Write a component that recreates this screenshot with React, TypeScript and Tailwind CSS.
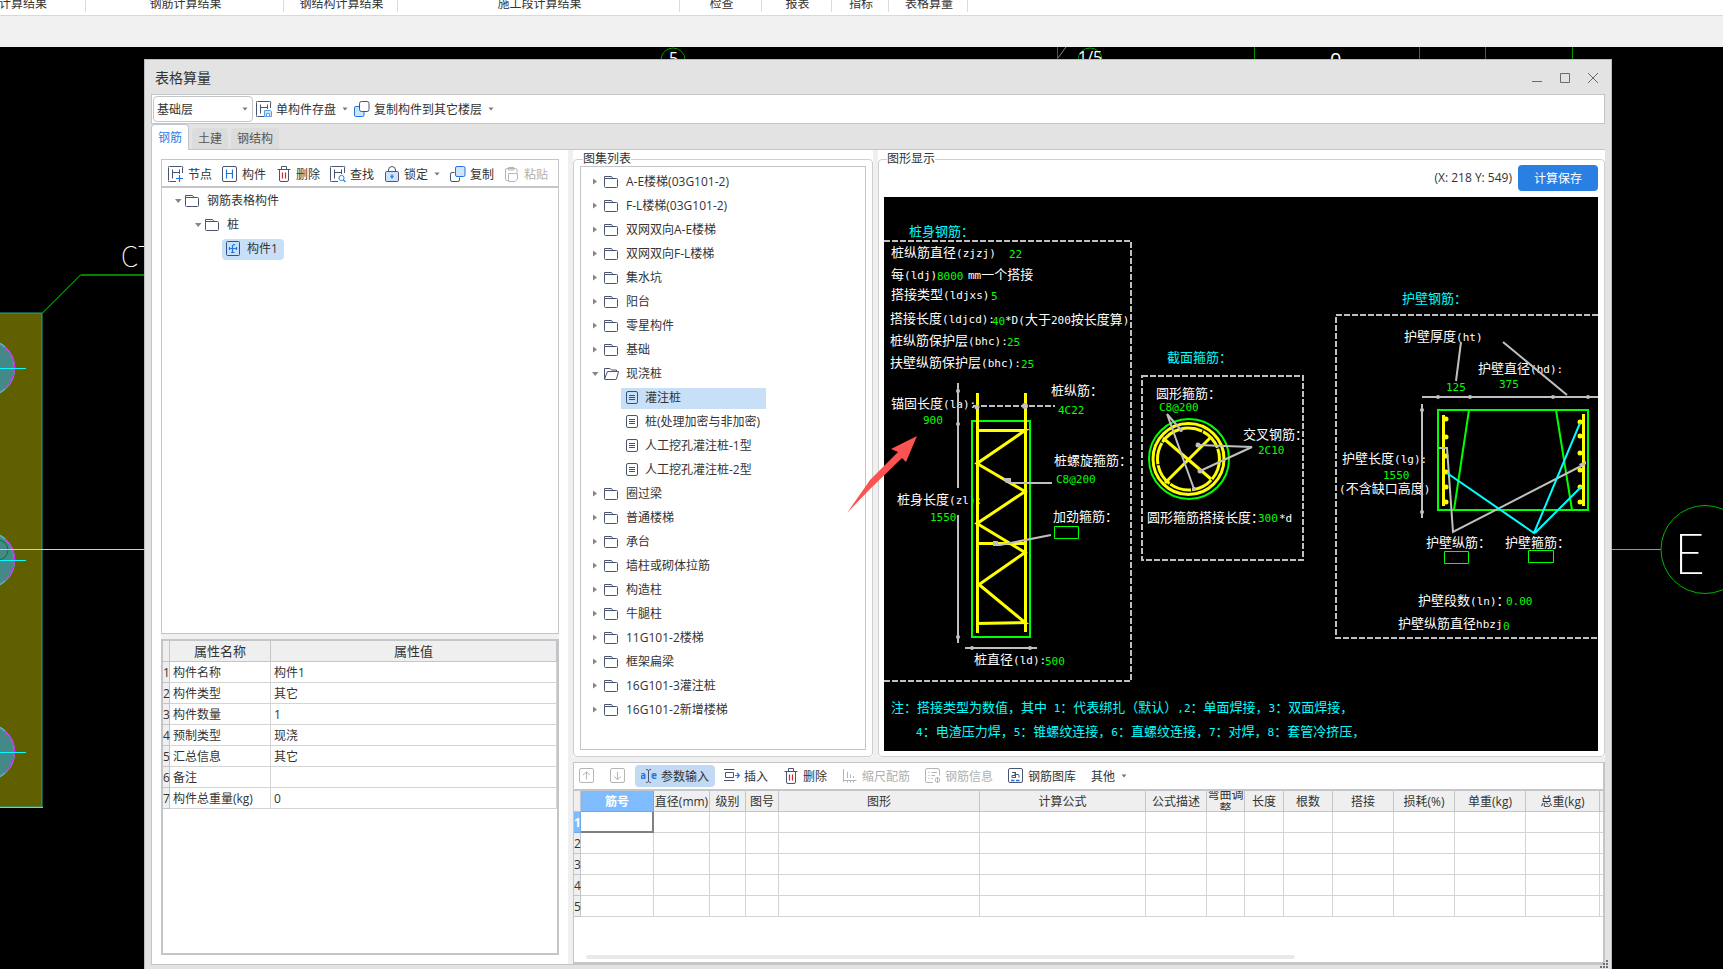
import type { ReactNode } from "react";

/* ---------- data ---------- */

const RIBBON_GROUPS = [
  { label: "土建计算结果", cell: "w-[86px] justify-end pr-[38px]" },
  { label: "钢筋计算结果", cell: "w-[198px] justify-center pl-0.5" },
  { label: "钢结构计算结果", cell: "w-[114px] justify-center pl-0.5" },
  { label: "施工段计算结果", cell: "w-[282px] justify-center pl-0.5" },
  { label: "检查", cell: "w-[82px] justify-center pl-0.5" },
  { label: "报表", cell: "w-[70px] justify-center pl-0.5" },
  { label: "指标", cell: "w-[57px] justify-center pl-0.5" },
  { label: "表格算量", cell: "w-[79px] justify-center pl-0.5" },
];

const PROPERTIES = [
  ["构件名称", "构件1"],
  ["构件类型", "其它"],
  ["构件数量", "1"],
  ["预制类型", "现浇"],
  ["汇总信息", "其它"],
  ["备注", ""],
  ["构件总重量(kg)", "0"],
];

const ATLAS: { label: string; children?: string[] }[] = [
  { label: "A-E楼梯(03G101-2)" },
  { label: "F-L楼梯(03G101-2)" },
  { label: "双网双向A-E楼梯" },
  { label: "双网双向F-L楼梯" },
  { label: "集水坑" },
  { label: "阳台" },
  { label: "零星构件" },
  { label: "基础" },
  {
    label: "现浇桩",
    children: ["灌注桩", "桩(处理加密与非加密)", "人工挖孔灌注桩-1型", "人工挖孔灌注桩-2型"],
  },
  { label: "圈过梁" },
  { label: "普通楼梯" },
  { label: "承台" },
  { label: "墙柱或砌体拉筋" },
  { label: "构造柱" },
  { label: "牛腿柱" },
  { label: "11G101-2楼梯" },
  { label: "框架扁梁" },
  { label: "16G101-3灌注桩" },
  { label: "16G101-2新增楼梯" },
];

const REBAR_COLUMNS = [
  { label: "筋号", col: "w-[73px]" },
  { label: "直径(mm)", col: "w-[56px]" },
  { label: "级别", col: "w-[36px]" },
  { label: "图号", col: "w-[33px]" },
  { label: "图形", col: "w-[201px]" },
  { label: "计算公式", col: "w-[166px]" },
  { label: "公式描述", col: "w-[61px]" },
  { label: "弯曲调整", col: "w-[38px]" },
  { label: "长度", col: "w-[39px]" },
  { label: "根数", col: "w-[49px]" },
  { label: "搭接", col: "w-[61px]" },
  { label: "损耗(%)", col: "w-[61px]" },
  { label: "单重(kg)", col: "w-[71px]" },
  { label: "总重(kg)", col: "w-[74px]" },
];

type Note = [x: number, y: number, text: string];

const WHITE_NOTES: Note[] = [
  [7, 60, "桩纵筋直径(zjzj)"],
  [7, 82, "每(ldj)"],
  [84, 82, "mm一个搭接"],
  [7, 102, "搭接类型(ldjxs)"],
  [6, 126, "搭接长度(ldjcd):"],
  [121, 127, "*D(大于200按长度算)"],
  [6, 148, "桩纵筋保护层(bhc):"],
  [6, 170, "扶壁纵筋保护层(bhc):"],
  [7, 211, "锚固长度(la):"],
  [167, 198, "桩纵筋："],
  [170, 268, "桩螺旋箍筋："],
  [169, 324, "加劲箍筋："],
  [13, 307, "桩身长度(zl):"],
  [90, 467, "桩直径(ld):"],
  [272, 201, "圆形箍筋："],
  [359, 242, "交叉钢筋："],
  [263, 325, "圆形箍筋搭接长度："],
  [395, 325, "*d"],
  [520, 144, "护壁厚度(ht)"],
  [594, 176, "护壁直径(hd):"],
  [458, 266, "护壁长度(lg):"],
  [455, 296, "(不含缺口高度)"],
  [542, 350, "护壁纵筋："],
  [621, 350, "护壁箍筋："],
  [534, 408, "护壁段数(ln)："],
  [514, 431, "护壁纵筋直径hbzj"],
];

const GREEN_NOTES: Note[] = [
  [125, 61, "22"],
  [53, 83, "8000"],
  [107, 103, "5"],
  [108, 128, "40"],
  [123, 149, "25"],
  [137, 171, "25"],
  [39, 227, "900"],
  [174, 217, "4C22"],
  [172, 286, "C8@200"],
  [46, 324, "1550"],
  [161, 468, "500"],
  [275, 214, "C8@200"],
  [374, 257, "2C10"],
  [374, 325, "300"],
  [562, 194, "125"],
  [615, 191, "375"],
  [499, 282, "1550"],
  [622, 408, "0.00"],
  [619, 433, "0"],
];

const CYAN_NOTES: Note[] = [
  [25, 39, "桩身钢筋："],
  [283, 165, "截面箍筋："],
  [518, 106, "护壁钢筋："],
  [7, 515, "注：搭接类型为数值，其中 1：代表绑扎（默认）,2：单面焊接，3：双面焊接，"],
  [32, 539, "4：电渣压力焊，5：锥螺纹连接，6：直螺纹连接，7：对焊，8：套管冷挤压，"],
];

/* ---------- icons ---------- */

function Icon({ children, className = "text-[#4a5370]" }: { children: ReactNode; className?: string }) {
  return (
    <svg viewBox="0 0 16 16" className={`size-4 shrink-0 ${className}`} fill="none" stroke="currentColor">
      {children}
    </svg>
  );
}

const FrameCut = () => (
  <>
    <path d="M8 15.500H2A1 1 0 0 1 .5 14V2A1 1 0 0 1 2 .5h11A1 1 0 0 1 14.500 2V7" />
    <path d="M4.500 3.500v9M11.500 3.500V8M4.500 6.500h7" />
  </>
);

const SaveIcon = () => (
  <Icon>
    <FrameCut />
    <path d="M8.500 9.500h6l1 1v5h-7z" stroke="#5a9dec" fill="#cfe3fa" />
    <path d="M10.500 12.500h3v3h-3z" stroke="#5a9dec" fill="#fff" />
  </Icon>
);

const NodeIcon = () => (
  <Icon>
    <FrameCut />
    <path d="M11.500 9v7M8 12.500h7" stroke="#1f74e0" strokeWidth="1.200" />
  </Icon>
);

const MemberIcon = () => (
  <Icon>
    <rect x=".5" y=".5" width="14" height="15" rx="1.500" />
    <path d="M4.500 3.500v9M10.500 3.500v9M4.500 7.500h6" stroke="#1f74e0" strokeWidth="1.200" />
  </Icon>
);

const TrashIcon = () => (
  <Icon>
    <path d="M1.500 3.500h13M5.500 3.500v-3h5v3M3.500 3.500V14A1.500 1.500 0 0 0 5 15.500h6a1.500 1.500 0 0 0 1.500-1.500V3.500" />
    <path d="M6.500 6.500v6M9.500 6.500v6" stroke="#d8242b" strokeWidth="1.200" />
  </Icon>
);

const FindIcon = () => (
  <Icon>
    <FrameCut />
    <circle cx="11.500" cy="12" r="2.600" stroke="#2a7fe2" />
    <path d="m13.500 14 2 2" stroke="#2a7fe2" strokeWidth="1.300" />
  </Icon>
);

const LockIcon = () => (
  <Icon>
    <path d="M4.500 5.500V4a3.500 3.500 0 0 1 7 0v1.500" />
    <rect x="1.500" y="5.500" width="13" height="10" rx="1.200" fill="#cfe3fa" />
    <path d="M8 8.500v4M6.500 10.500h3" stroke="#1f74e0" strokeWidth="1.300" />
  </Icon>
);

const CopyIcon = () => (
  <Icon>
    <path d="M4.500 6.500H2A1.500 1.500 0 0 0 .5 8v6A1.500 1.500 0 0 0 2 15.500h6A1.500 1.500 0 0 0 9.500 14v-2.500" />
    <rect x="5.500" y=".5" width="9.500" height="10" rx="1.500" stroke="#1f74e0" fill="#cfe3fa" />
  </Icon>
);

const CopyToIcon = () => (
  <Icon>
    <rect x=".5" y="5.500" width="9.500" height="10" rx="1.300" stroke="#1f74e0" fill="#cfe3fa" />
    <rect x="5.500" y=".5" width="9.500" height="10" rx="2" fill="#fff" />
  </Icon>
);

const PasteIcon = () => (
  <Icon className="text-[#b5b5b5]">
    <path d="M4.500 14.500H3A1.500 1.500 0 0 1 1.500 13V4A1.500 1.500 0 0 1 3 2.500h8.500A1.500 1.500 0 0 1 13 4v2.500M4.500 1.500h5.500V4H4.500z" />
    <path d="M4.500 7.500h9v5.500l-2.500 2.500H4.500z" />
  </Icon>
);

const FolderIcon = () => (
  <Icon>
    <path d="M1.500 4.500v-2h7l1.500 2M1.500 4.500h12a1 1 0 0 1 1 1v7a1 1 0 0 1-1 1h-11a1 1 0 0 1-1-1z" />
  </Icon>
);

const FolderOpenIcon = () => (
  <Icon>
    <path d="M1.500 13V2.500H7l1.500 1.500h5v1.500M1.500 13l3-7.500h11l-2 7.500a.8.8 0 0 1-.8.500H2a.5.5 0 0 1-.5-.5Z" />
  </Icon>
);

const SheetIcon = ({ active = false }: { active?: boolean }) => (
  <Icon className={active ? "text-[#2c5587]" : undefined}>
    <rect x="2.500" y="1.500" width="11" height="12" rx="1.500" />
    <path d="M5 5.500h6M5 7.500h6M5 9.500h6" />
  </Icon>
);

const MemberNodeIcon = () => (
  <Icon className="text-[#2c5587]">
    <rect x="1.500" y=".5" width="13" height="14" rx="1" />
    <path d="M4.500 7.500h7M7.500 11.500V5A1.500 1.500 0 0 1 10 4M4.500 6v3M11.500 6v3M6 11.500h3.500" stroke="#1f74e0" strokeWidth="1.200" />
  </Icon>
);

const ArrowBoxIcon = ({ down = false }: { down?: boolean }) => (
  <Icon className="text-[#b5b5b5]">
    <rect x=".5" y=".5" width="14" height="14" rx="1.500" />
    <path d={down ? "M7.500 4v7.500M4 8.500l3.500 3 3.500-3" : "M7.500 11.500V4M4 7l3.500-3L11 7"} />
  </Icon>
);

const ParamIcon = () => (
  <svg viewBox="0 0 16 16" className="size-4 shrink-0">
    <text x="-1" y="11" fill="#1f74e0" className="font-['Open_Sans',sans-serif] text-[10px] font-bold">a</text>
    <text x="10" y="11" fill="#1f74e0" className="font-['Open_Sans',sans-serif] text-[10px] font-bold">e</text>
    <path d="M5 1.500c1.500 0 2.500.5 2.500 1.500v10c0 1-1 1.500-2.500 1.500M10 1.500C8.500 1.500 7.500 2 7.500 3v10c0 1 1 1.500 2.500 1.500" fill="none" stroke="#4a5370" />
  </svg>
);

const InsertIcon = () => (
  <Icon>
    <path d="M0 1.500h10.500M0 12.500h10.500M1.500 4.500h8v5h-8z" />
    <path d="M11 7.500h4M13 5l2.500 2.500L13 10" stroke="#1f74e0" strokeWidth="1.200" />
  </Icon>
);

const ScaleIcon = () => (
  <Icon className="text-[#b5b5b5]">
    <path d="M1.500 1v13M5.500 4v6M8.500 6.500V10M11.500 8v2M1.500 12.500h13M5.500 12.500v2M8.500 12.500v2M11.500 12.500v2" />
  </Icon>
);

const InfoIcon = () => (
  <Icon className="text-[#b5b5b5]">
    <path d="M8 14.500H2A1.500 1.500 0 0 1 .5 13V2A1.500 1.500 0 0 1 2 .5h11A1.500 1.500 0 0 1 14.500 2v5.500M3.500 4.500h1M6.500 4.500H12M3.500 7.500h1M6.500 7.500H10M3.500 10.500h1M6.500 10.500H8" />
    <circle cx="12.500" cy="12" r="2.300" />
    <path d="M12.500 9v6" />
  </Icon>
);

const LibraryIcon = () => (
  <Icon>
    <rect x=".5" y=".5" width="14" height="14" rx="1.500" />
    <path d="M4 4.500h3V8M4 7.500h3M4 7.500v2h4M7.500 4v6M7.500 6.500H10a1 1 0 0 1 1 1v2" />
    <path d="M3 12.500h3.500M8 12.500h3.500" stroke="#1f74e0" strokeWidth="1.300" />
  </Icon>
);

const Caret = ({ className = "" }: { className?: string }) => (
  <svg viewBox="0 0 6 4" className={`h-1 w-1.5 shrink-0 ${className}`}>
    <path d="M.5.5h5L3 3.500z" fill="#777" />
  </svg>
);

const Twisty = ({ open = false }: { open?: boolean }) => (
  <svg viewBox="0 0 8 8" className="size-2 shrink-0">
    <path d={open ? "M1 2h6.500L4.200 6z" : "M2 .5v6l4-3z"} fill="#858585" />
  </svg>
);

/* ---------- shared parts ---------- */

type ToolProps = {
  icon?: ReactNode;
  label?: string;
  title?: string;
  caret?: boolean;
  disabled?: boolean;
  active?: boolean;
};

function Tool({ icon, label, title, caret, disabled, active }: ToolProps) {
  return (
    <button
      type="button"
      aria-label={title}
      disabled={disabled}
      className={`flex h-[22px] shrink-0 items-center gap-1 whitespace-nowrap disabled:text-[#b0b0b0] ${
        active ? "-mx-1.5 rounded bg-[#c1d9f2] px-1.5" : ""
      }`}
    >
      {icon}
      {label && <span className="pt-0.5">{label}</span>}
      {caret && <Caret className="ml-0.5" />}
    </button>
  );
}

/* ---------- CAD view behind the dialog ---------- */

function CadBackdrop() {
  const letter = "fill-white font-['Noto_Sans_CJK_SC',sans-serif] font-thin";
  return (
    <svg className="absolute inset-0 h-full w-full" fill="none" aria-hidden="true">
      <rect x="-4" y="266" width="46" height="494" fill="#606000" stroke="#22a79c" />
      <path d="M0 760.500h43" stroke="#0ff" />
      <path d="M42.500 266 81 227.500" stroke="#0e0" />
      <path d="M81 228h64" stroke="#008400" strokeWidth="2" />
      {[321, 513, 705].map((y) => (
        <g key={y}>
          <circle cx="-13.500" cy={y} r="28" fill="#448888" stroke="#63b2c4" strokeWidth="1.500" />
          <path d={`M5 ${y - 21}Q15 ${y - 12} 14.500 ${y}T5 ${y + 21}`} stroke="#f0f" />
          <path d={`M0 ${y + 0.5}h26`} stroke="#0ff" />
        </g>
      ))}
      <circle cx="-2" cy="503" r="10" stroke="#007a30" />
      <path d="M0 502.500h145" stroke="#d0d0d0" />
      <text x="121" y="220" className={`${letter} text-[28px]`}>CT</text>

      <path d="M1600 502.500h61" stroke="#0f0" />
      <circle cx="1705" cy="502.500" r="44" stroke="#00b400" />
      <text x="1674" y="527" className={`${letter} text-[55px]`}>E</text>

      <circle cx="673" cy="13" r="12" stroke="#00a000" />
      <circle cx="1090" cy="13" r="12" stroke="#00a000" />
      <path d="M1057.500 0v14" stroke="#c000c0" />
      <path d="m1058 11 8-11" stroke="#888" />
      <path d="M1254.500 0v14M1419.500 0v14M1485.500 0v14M1572.500 0v14" stroke="#009000" />
      <text x="669" y="17" className="fill-white font-['Open_Sans',sans-serif] text-[16px]">5</text>
      <text x="1078" y="16" className="fill-white font-['Open_Sans',sans-serif] text-[16px]">1/5</text>
      <text x="1330" y="20" className="fill-white font-['Open_Sans',sans-serif] text-[20px]">0</text>
    </svg>
  );
}

/* ---------- pile drawing ---------- */

function DrawingText({ notes, fill }: { notes: Note[]; fill: string }) {
  return (
    <g className={`${fill} stroke-none font-['Noto_Sans_CJK_SC',sans-serif] text-[13px]`}>
      {notes.map(([x, y, text]) => (
        <text key={`${x}-${y}`} x={x} y={y}>
          {text.split(/([\x20-\x7e]+)/).map((run, i) =>
            i % 2 ? (
              <tspan key={i} className="font-['DejaVu_Sans_Mono',monospace] text-[11px]">{run}</tspan>
            ) : (
              run
            )
          )}
        </text>
      ))}
    </g>
  );
}

function PileDrawing() {
  return (
    <svg width="714" height="554" fill="none" strokeWidth="2" role="img" aria-label="灌注桩">
      {/* frames */}
      <g stroke="#c0c0c0" strokeDasharray="6 2">
        <path d="M0 44h247v440H0" />
        <path d="M258 179h161v184H258z" />
        <path d="M714 118H452v323h262" />
      </g>

      <DrawingText notes={CYAN_NOTES} fill="fill-[#0ff]" />
      <DrawingText notes={WHITE_NOTES} fill="fill-white" />

      {/* pile elevation */}
      <path d="M88 224h58v216H88z" stroke="#0f0" />
      <g stroke="#ff0" strokeWidth="3">
        <path d="M93.500 196v240M141.500 196v239" />
        <path d="M93 233.500h48L93 266.500l48 28-48 32 48 29-46 32 46 38-49 1M93 346.500h48" />
      </g>
      <g stroke="#c0c0c0">
        <path d="M74 186v105M74 318v128M81 451h72" />
        <path d="M89 209h82" strokeDasharray="6 2" />
        <path d="M126 286h42M111 348h5l51-10" />
      </g>
      <g fill="#c0c0c0">
        <circle cx="74" cy="194" r="2" />
        <circle cx="74" cy="227" r="2" />
        <circle cx="74" cy="440" r="2" />
        <circle cx="88" cy="451" r="2" />
        <circle cx="146" cy="451" r="2" />
        <circle cx="141" cy="209" r="3" />
        <circle cx="93" cy="210" r="2.500" />
        <path d="M119 281h8v5h-5zM109 344h5v5h-5z" />
      </g>

      {/* section */}
      <circle cx="305" cy="262" r="40" stroke="#0f0" />
      <g stroke="#ff0" strokeWidth="3">
        <circle cx="304.500" cy="262" r="35.500" />
        <circle cx="304.500" cy="262" r="31" strokeDasharray="22 1" />
        <path d="m279 241 48 41M327 240l-46 46" />
      </g>
      <g stroke="#c0c0c0">
        <path d="m283 217 14 16M283 217l27 75M314 248l54 2-52 24" />
      </g>
      <g fill="#c0c0c0">
        <circle cx="297" cy="233" r="2" />
        <circle cx="310" cy="292" r="2" />
        <circle cx="314" cy="248" r="2.500" />
        <circle cx="316" cy="274" r="2.500" />
      </g>

      {/* retaining wall */}
      <path d="M554 213h150v100H554zM585 213l-15 100M672 213l16 100" stroke="#0f0" />
      <path d="M559.500 218v91M699.500 217v92" stroke="#ff0" strokeWidth="3" />
      <g fill="#ff0">
        {[222, 240, 259, 275, 290, 305].map((y) => (
          <circle key={y} cx="562" cy={y} r="2.500" />
        ))}
        {[225, 239, 256, 273, 290, 305].map((y) => (
          <circle key={y} cx="696" cy={y} r="2.500" />
        ))}
      </g>
      <g stroke="#c0c0c0">
        <path d="M538 200h176M538 207v114M577 145l-5 39M619 145l64 53" />
        <path d="M555 251h8l6 84 132-68" />
      </g>
      <g fill="#c0c0c0">
        {[554, 586, 669, 704].map((x) => (
          <circle key={x} cx={x} cy="200" r="2" />
        ))}
        <circle cx="538" cy="213" r="2" />
        <circle cx="538" cy="315" r="2" />
        <path d="m695 267 7-3v3l-5 3z" />
      </g>
      <path d="m563 276 87 60 46-110M651 336l46-46" stroke="#0ff" />

      {/* empty value boxes */}
      <g stroke="#0f0" strokeWidth="1">
        <path d="M170.500 329.500h24v12h-24zM560.500 354.500h24v12h-24zM644.500 353.500h25v12h-25z" />
      </g>
      <DrawingText notes={GREEN_NOTES} fill="fill-[#0f0]" />
    </svg>
  );
}

/* ---------- panels ---------- */

function LeftPane() {
  return (
    <section className="flex w-[417px] shrink-0 flex-col border-l border-[#c3c5c9] bg-white p-[9px]">
      <div className="flex h-[29px] shrink-0 items-center gap-2.5 border border-b-2 border-[#c3c5c9] pt-0.5 pl-1.5">
        <Tool icon={<NodeIcon />} label="节点" />
        <Tool icon={<MemberIcon />} label="构件" />
        <Tool icon={<TrashIcon />} label="删除" />
        <Tool icon={<FindIcon />} label="查找" />
        <Tool icon={<LockIcon />} label="锁定" caret />
        <Tool icon={<CopyIcon />} label="复制" />
        <Tool icon={<PasteIcon />} label="粘贴" disabled />
      </div>

      <ul className="min-h-0 flex-1 border border-t-0 border-[#c3c5c9] pt-px leading-6">
        <li>
          <div className="flex items-center pl-3">
            <Twisty open />
            <span className="mr-[7px] ml-0.5 flex"><FolderIcon /></span>
            钢筋表格构件
          </div>
          <ul>
            <li>
              <div className="flex items-center pl-8">
                <Twisty open />
                <span className="mr-[7px] ml-0.5 flex"><FolderIcon /></span>
                桩
              </div>
              <ul>
                <li className="flex h-6 items-center pl-[60px]">
                  <div className="flex h-[21px] items-center gap-1.5 rounded bg-[#c8dff8] pr-1.5 pl-[3px]">
                    <MemberNodeIcon />
                    构件1
                  </div>
                </li>
              </ul>
            </li>
          </ul>
        </li>
      </ul>

      <div className="h-[5px] shrink-0 bg-[#f0f0f0]" />

      <div className="h-[316px] shrink-0 border-2 border-[#c3c5c9]">
        <table className="w-[394px] table-fixed border-separate border-spacing-0">
          <colgroup>
            <col className="w-[7px]" />
            <col className="w-[101px]" />
            <col />
          </colgroup>
          <thead>
            <tr className="h-[21px] bg-[#efefef] text-[13px] leading-5">
              <th className="border-r border-b border-[#c3c5c9] p-0" />
              <th className="border-r border-b border-[#c3c5c9] p-0 font-normal">属性名称</th>
              <th className="border-r border-b border-[#c3c5c9] p-0 font-normal">属性值</th>
            </tr>
          </thead>
          <tbody>
            {PROPERTIES.map(([name, value], i) => (
              <tr key={name} className="h-[21px] leading-[18px]">
                <td className="border-r border-b border-[#c3c5c9] bg-[#efefef] px-0 pt-0.5 pb-0">{i + 1}</td>
                <td className="border-r border-b border-[#d4d4d4] pt-0.5 pr-0 pb-0 pl-[3px] whitespace-nowrap">{name}</td>
                <td className="border-r border-b border-[#d4d4d4] pt-0.5 pr-0 pb-0 pl-[3px]">{value}</td>
              </tr>
            ))}
          </tbody>
        </table>
      </div>
    </section>
  );
}

function AtlasPane() {
  return (
    <div className="flex w-[300px] shrink-0 bg-white">
      <fieldset className="flex min-w-0 flex-1 flex-col rounded border border-[#cfcfcf] px-1.5 pb-1.5">
        <legend className="ml-[3px] leading-[18px]">图集列表</legend>
        <ul className="-mt-0.5 min-h-0 flex-1 overflow-hidden border border-[#c3c5c9] pt-[3px] leading-6">
          {ATLAS.map((node) => (
            <li key={node.label}>
              <div className="flex items-center pl-2.5">
                <Twisty open={!!node.children} />
                <span className="mr-[7px] ml-1 flex">{node.children ? <FolderOpenIcon /> : <FolderIcon />}</span>
                {node.label}
              </div>
              {node.children && (
                <ul>
                  {node.children.map((child, i) => (
                    <li key={child} className="flex h-6 items-center pl-10">
                      <div className={`flex h-[21px] w-[145px] items-center gap-[5px] pl-[3px] whitespace-nowrap ${i === 0 ? "bg-[#c8dff8]" : ""}`}>
                        <SheetIcon active={i === 0} />
                        {child}
                      </div>
                    </li>
                  ))}
                </ul>
              )}
            </li>
          ))}
        </ul>
      </fieldset>
    </div>
  );
}

function DrawingPane() {
  return (
    <div className="relative flex min-w-0 flex-1 bg-white">
      <fieldset className="flex min-w-0 flex-1 flex-col rounded border border-[#cfcfcf] pr-1.5 pb-[5px] pl-[5px]">
        <legend className="ml-[3px] leading-[18px]">图形显示</legend>
        <div className="-mt-[3px] mb-1.5 flex shrink-0 items-center justify-end gap-1.5">
          <output>(X: 218 Y: 549)</output>
          <button type="button" className="h-[26px] w-20 rounded bg-[#2a7fe2] pt-0.5 text-white">计算保存</button>
        </div>
        <div className="min-h-0 flex-1 overflow-hidden bg-black">
          <PileDrawing />
        </div>
      </fieldset>
      {/* callout pointing at the anchorage length */}
      <svg width="70" height="78" className="pointer-events-none absolute top-[286px] -left-[31px]">
        <path d="M0 77 23 44l28-28-7-3L70 0 59 26l-4-4-32 31z" fill="#fb5252" />
      </svg>
    </div>
  );
}

function RebarPane() {
  return (
    <section className="flex h-[202px] shrink-0 flex-col border border-r-2 border-b-2 border-[#c3c5c9] bg-white">
      <div className="flex h-[28px] shrink-0 items-center gap-[15px] border-b-2 border-[#c3c5c9] pl-[5px]">
        <Tool icon={<ArrowBoxIcon />} title="上移" disabled />
        <Tool icon={<ArrowBoxIcon down />} title="下移" disabled />
        <Tool icon={<ParamIcon />} label="参数输入" active />
        <Tool icon={<InsertIcon />} label="插入" />
        <Tool icon={<TrashIcon />} label="删除" />
        <Tool icon={<ScaleIcon />} label="缩尺配筋" disabled />
        <Tool icon={<InfoIcon />} label="钢筋信息" disabled />
        <Tool icon={<LibraryIcon />} label="钢筋图库" />
        <Tool label="其他" caret />
      </div>

      <div className="min-h-0 flex-1 overflow-hidden">
        <table className="w-full table-fixed border-separate border-spacing-0">
          <colgroup>
            <col className="w-[7px]" />
            {REBAR_COLUMNS.map((c) => (
              <col key={c.label} className={c.col} />
            ))}
            <col />
          </colgroup>
          <thead>
            <tr className="h-[21px] bg-[#efefef]">
              <th className="border-r border-b border-[#c3c5c9] p-0" />
              {REBAR_COLUMNS.map((c, i) => (
                <th
                  key={c.label}
                  className={`border-r border-b p-0 ${
                    i === 0 ? "border-[#6ea9ec] bg-[#7fbbff] font-bold text-white" : "border-[#c3c5c9] font-normal"
                  }`}
                >
                  <div className="flex h-5 items-center justify-center overflow-hidden pt-0.5 leading-[14px]">{c.label}</div>
                </th>
              ))}
              <th className="border-b border-[#c3c5c9] p-0" />
            </tr>
          </thead>
          <tbody>
            {[1, 2, 3, 4, 5].map((n) => (
              <tr key={n} className="h-[21px] leading-[18px]">
                <td
                  className={`border-r border-b px-0 pt-0.5 pb-0 ${
                    n === 1 ? "border-[#6ea9ec] bg-[#7fbbff] font-bold text-white" : "border-[#c3c5c9] bg-[#efefef]"
                  }`}
                >
                  {n}
                </td>
                {REBAR_COLUMNS.map((c, i) => (
                  <td
                    key={c.label}
                    className={`p-0 ${
                      n === 1 && i === 0 ? "border-r-2 border-b-2 border-[#808080]" : "border-r border-b border-[#d4d4d4]"
                    }`}
                  />
                ))}
                <td className="border-b border-[#d4d4d4] p-0" />
              </tr>
            ))}
          </tbody>
        </table>
      </div>

      <div className="mr-[308px] mb-[3px] ml-3 h-1 shrink-0 rounded-full bg-[#e9e9e9]" />
    </section>
  );
}

function TitleBar() {
  return (
    <header className="flex h-[34px] shrink-0 items-center justify-between pt-0.5 pr-1.5 pl-1">
      <h1 className="text-sm">表格算量</h1>
      <div className="flex gap-4 text-[#6b6b6b]">
        <button type="button" aria-label="最小化">
          <svg width="12" height="12" stroke="currentColor"><path d="M1 9.500h10" /></svg>
        </button>
        <button type="button" aria-label="最大化">
          <svg width="12" height="12" stroke="currentColor" fill="none"><path d="M1.500 1.500h9v9h-9z" /></svg>
        </button>
        <button type="button" aria-label="关闭">
          <svg width="12" height="12" stroke="currentColor"><path d="m1 1 10 10M11 1 1 11" /></svg>
        </button>
      </div>
    </header>
  );
}

export default function App() {
  return (
    <div
      lang="zh-CN"
      className="flex h-screen min-h-[720px] flex-col overflow-hidden bg-black font-['Open_Sans','Noto_Sans_CJK_SC',sans-serif] text-[12px] leading-4 text-[#333]"
    >
      {/* bottom edge of the ribbon */}
      <nav className="flex h-4 shrink-0 overflow-hidden border-b border-[#d8d8d8] bg-white">
        {RIBBON_GROUPS.map((g) => (
          <div key={g.label} className={`flex h-3 shrink-0 items-end border-r border-[#dcdcdc] whitespace-nowrap ${g.cell}`}>
            {g.label}
          </div>
        ))}
      </nav>
      <div className="h-[31px] shrink-0 bg-[#f1f1f1]" />

      <main className="relative flex min-h-0 flex-1 pt-3 pr-[111px] pl-36">
        <CadBackdrop />

        <div className="relative flex min-w-0 flex-1 flex-col border border-b-0 border-[#bcbcbc] bg-[#e3e3e3] px-1.5">
          <TitleBar />

          <div className="flex h-[30px] shrink-0 items-center border border-[#c3c5c9] bg-white pl-px">
            <label className="relative mr-[3px] flex">
              <span className="sr-only">楼层</span>
              <select className="h-[26px] w-[100px] appearance-none rounded border border-[#c3c5c9] bg-white pt-0.5 pl-[3px]">
                <option>基础层</option>
              </select>
              <Caret className="absolute top-[11px] right-[5px]" />
            </label>
            <div className="flex gap-1.5">
              <Tool icon={<SaveIcon />} label="单构件存盘" caret />
              <Tool icon={<CopyToIcon />} label="复制构件到其它楼层" caret />
            </div>
          </div>

          <div className="flex h-[26px] shrink-0 items-end border-b border-[#c3c5c9]" role="tablist">
            <button type="button" role="tab" aria-selected="true" className="-mb-px h-[26px] w-[38px] rounded-t border border-b-0 border-[#c3c5c9] bg-white text-[#2a7fe2]">
              钢筋
            </button>
            <button type="button" role="tab" aria-selected="false" className="ml-[3px] h-[21px] w-9 rounded-t bg-[#dcdcdc] text-[#555]">
              土建
            </button>
            <button type="button" role="tab" aria-selected="false" className="ml-[3px] h-[21px] w-12 rounded-t bg-[#dcdcdc] text-[#555]">
              钢结构
            </button>
          </div>

          <div className="flex min-h-0 flex-1 gap-[5px] border-b border-[#c3c5c9] bg-[#f0f0f0]">
            <LeftPane />
            <div className="flex min-w-0 flex-1 flex-col gap-[5px]">
              <div className="flex min-h-0 flex-1 gap-[5px]">
                <AtlasPane />
                <DrawingPane />
              </div>
              <RebarPane />
            </div>
          </div>
          <div className="h-1 shrink-0" />

          {/* resize grip */}
          <svg width="9" height="9" className="absolute right-0.5 bottom-0">
            <path d="M6 0h2v2H6zM3 3h2v2H3zM6 3h2v2H6zM0 6h2v2H0zM3 6h2v2H3zM6 6h2v2H6z" fill="#6b7078" />
          </svg>
        </div>
      </main>
    </div>
  );
}
